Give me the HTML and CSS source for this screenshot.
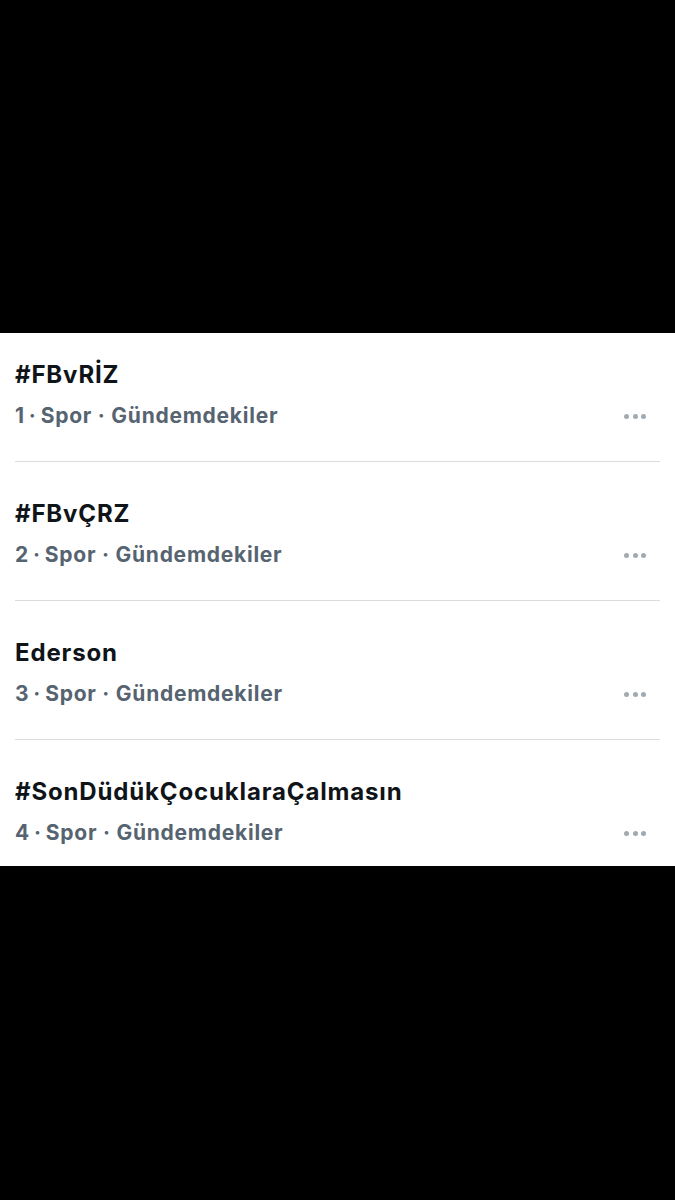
FILE: index.html
```html
<!DOCTYPE html>
<html lang="tr">
<head>
    <meta charset="UTF-8">
    <meta name="viewport" content="width=device-width, initial-scale=1.0">
    <title>Gündem</title>
    <link rel="stylesheet" href="styles.css">
</head>
<body>
    <div class="topBar"></div>
    <div class="trends">
        <div class="trend">
            <div class="trendText">
                <p class="trendName">#FBvRİZ</p>
                <p class="trendMeta">1&thinsp;·&thinsp;Spor · Gündemdekiler</p>
            </div>
            <span class="more"><i></i><i></i><i></i></span>
        </div>
        <div class="trend">
            <div class="trendText">
                <p class="trendName">#FBvÇRZ</p>
                <p class="trendMeta">2&thinsp;·&thinsp;Spor · Gündemdekiler</p>
            </div>
            <span class="more"><i></i><i></i><i></i></span>
        </div>
        <div class="trend">
            <div class="trendText">
                <p class="trendName">Ederson</p>
                <p class="trendMeta">3&thinsp;·&thinsp;Spor · Gündemdekiler</p>
            </div>
            <span class="more"><i></i><i></i><i></i></span>
        </div>
        <div class="trend">
            <div class="trendText">
                <p class="trendName">#SonDüdükÇocuklaraÇalmasın</p>
                <p class="trendMeta">4&thinsp;·&thinsp;Spor · Gündemdekiler</p>
            </div>
            <span class="more"><i></i><i></i><i></i></span>
        </div>
    </div>
</body>
</html>
```

FILE: styles.css
```css
*{
    margin: 0;
    padding: 0;
    box-sizing: border-box;
}
body{
    background-color: #000000;
    font-family: Inter, "Liberation Sans", sans-serif;
    height: 1200px;
}
.topBar{
    height: 333px;
}
.trends{
    background-color: #ffffff;
    padding: 0 15px;
    height: 533px;
}
.trend{
    display: flex;
    align-items: flex-start;
    justify-content: space-between;
    height: 139px;
    padding: 37px 14px 0 0;
    border-bottom: 1px solid #d9dde0;
}
.trend:first-child{
    height: 129px;
    padding-top: 27px;
}
.trend:last-child{
    border-bottom: none;
    height: 126px;
}
.trendName{
    font-size: 24px;
    line-height: 30px;
    font-weight: 700;
    color: #0f1419;
    letter-spacing: 0.85px;
}
.trendMeta{
    margin-top: 13px;
    font-size: 21px;
    line-height: 26px;
    font-weight: 700;
    color: #566370;
    letter-spacing: 0.75px;
}
.more{
    display: flex;
    gap: 3.5px;
    margin-top: 54px;
}
.more i{
    display: block;
    width: 5px;
    height: 5px;
    border-radius: 50%;
    background-color: #a2aab1;
}
```
